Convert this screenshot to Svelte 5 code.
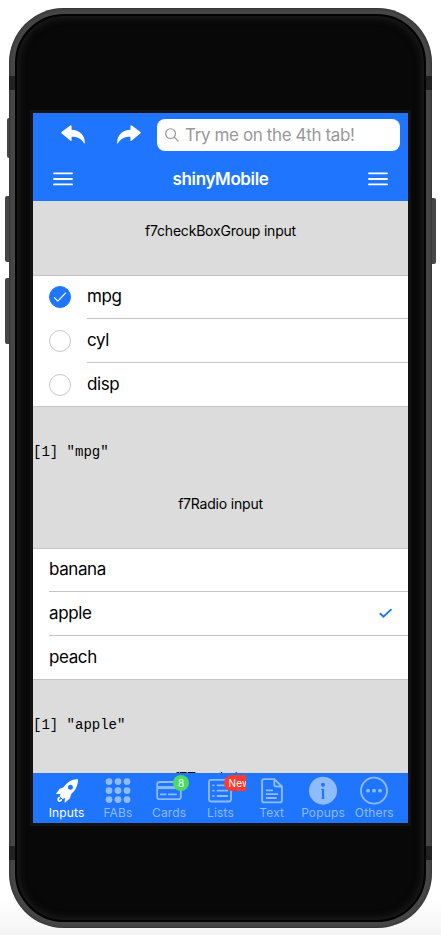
<script>
  const checks = [
    { label: 'mpg', on: true },
    { label: 'cyl', on: false },
    { label: 'disp', on: false }
  ];
  const radios = [
    { label: 'banana', on: false },
    { label: 'apple', on: true },
    { label: 'peach', on: false }
  ];
  const tabs = ['Inputs', 'FABs', 'Cards', 'Lists', 'Text', 'Popups', 'Others'];
  const grid = [5, 14, 23];
</script>

{#snippet menu()}
  <svg class="menu" width="20" height="14" viewBox="0 0 20 14" stroke="#fff" stroke-width="1.8" stroke-linecap="round">
    <path d="M1 1.3h18M1 7h18M1 12.4h18" />
  </svg>
{/snippet}

<div class="page">
  <div class="phone">
    <i class="band top"></i>
    <i class="band bottom"></i>
    <i class="key mute"></i>
    <i class="key up"></i>
    <i class="key down"></i>
    <i class="key power"></i>
    <div class="body">
      <div class="screen">
        <header class="subbar">
          <svg class="undo" width="25" height="20" viewBox="0 0 26 20" fill="#fff" preserveAspectRatio="none"><path d="M.5 8.2Q0 7.7.6 7.1L9.6.5Q11 0 11 1.4V4.7C19 5 25.2 10 24.8 18.2Q24.5 19 24 18.2C21 13.5 17 11.8 11 11.8V15Q11 16.4 9.6 15.6Z" /></svg>
          <svg class="redo" width="25" height="20" viewBox="0 0 26 20" fill="#fff" preserveAspectRatio="none"><path transform="matrix(-1 0 0 1 25 0)" d="M.5 8.2Q0 7.7.6 7.1L9.6.5Q11 0 11 1.4V4.7C19 5 25.2 10 24.8 18.2Q24.5 19 24 18.2C21 13.5 17 11.8 11 11.8V15Q11 16.4 9.6 15.6Z" /></svg>
          <div class="search">
            <svg width="14" height="14" viewBox="0 0 14 14" fill="none" stroke="#939398" stroke-width="1.15" stroke-linecap="round"><circle cx="5.6" cy="5.6" r="4.9" /><path d="m9.2 9.2 4 4" /></svg>
            <span>Try me on the 4th tab!</span>
          </div>
        </header>
        <nav class="navbar">
          {@render menu()}
          <span class="title">shinyMobile</span>
          {@render menu()}
        </nav>
        <main>
          <div class="heading first"><span>f7checkBoxGroup input</span></div>
          <ul class="list">
            {#each checks as c}
              <li>
                <span class="box" class:on={c.on}>
                  {#if c.on}
                    <svg width="14" height="12" viewBox="0 0 14 12" fill="none" stroke="#fff" stroke-width="1.1" stroke-linecap="round" stroke-linejoin="round"><path d="m1.4 6.6 3.4 3.5L12.6 2" /></svg>
                  {/if}
                </span>
                <span class="inner">{c.label}</span>
              </li>
            {/each}
          </ul>
          <pre>[1] "mpg"</pre>
          <div class="heading second"><span>f7Radio input</span></div>
          <ul class="list">
            {#each radios as r}
              <li>
                <span class="inner">{r.label}
                  {#if r.on}
                    <svg width="14" height="12" viewBox="0 0 14 12" fill="none" stroke="#1f75fe" stroke-width="1.9"><path d="m.8 6.3 3.7 3.5 8-7.7" /></svg>
                  {/if}
                </span>
              </li>
            {/each}
          </ul>
          <pre>[1] "apple"</pre>
          <div class="heading third"><span>f7Toggle input</span></div>
        </main>
        <footer class="tabbar">
          {#each tabs as t, i}
            <div class="tab" class:active={i === 0}>
              <div class="icon">
                <svg width="28" height="28" viewBox="0 0 28 28" fill="none" stroke="currentColor" stroke-width="1.8" stroke-linecap="round" stroke-linejoin="round">
                  {#if i === 0}
                    <path fill="currentColor" stroke="none" fill-rule="evenodd" d="M24.9 2.4C19 2 14 5.6 10.3 10.6L6.6 11.8 2.9 16.9 7.6 16.9 6.6 19.2 9.7 22.1 12 21 11.6 26 17 21.2 18.2 16.9C22.6 13.2 25.3 8 24.9 2.4ZM17.4 7.8a2.5 2.5 0 1 1 0 5a2.5 2.5 0 0 1 0-5Z" />
                    <path stroke-width="1.7" d="M6.2 20.6Q4.3 22.1 5.8 24Q6.9 24.3 8.3 22.8" />
                  {:else if i === 1}
                    {#each grid as y}{#each grid as x}<circle cx={x} cy={y - 0.4} r="3.4" fill="currentColor" stroke="none" />{/each}{/each}
                  {:else if i === 2}
                    <rect x="2.2" y="5" width="23.6" height="17.2" rx="2.2" />
                    <path stroke-linecap="butt" stroke-width="3" d="M2.2 10.6h23.6" />
                    <path d="M5.8 17.4h4.8M13.8 17.4h7.2" />
                  {:else if i === 3}
                    <rect x="3" y="2.9" width="22" height="21.6" rx="2.2" />
                    <path d="M7 8.3h.8M7 13.7h.8M7 19h.8M11.5 8.3h9.8M11.5 13.7h9.8M11.5 19h9.8" />
                  {:else if i === 4}
                    <path stroke-width="1.9" d="M16.3 2.1H6.1Q4.1 2.1 4.1 4.1V23.4Q4.1 25.4 6.1 25.4H21.9Q23.9 25.4 23.9 23.4V9.5L16.3 2.1V7.5Q16.3 9.5 18.3 9.5H23.9" />
                    <path d="M8.6 13.4h5.7M8.6 17.2h10.8M8.6 21h9.4" />
                  {:else if i === 5}
                    <circle cx="14" cy="13.7" r="14" fill="currentColor" stroke="none" />
                    <circle cx="14" cy="7.8" r="2" fill="#1f75fe" stroke="none" />
                    <path stroke="#1f75fe" stroke-linecap="butt" stroke-width="2.1" d="M14 12v9.6" />
                    <path stroke="#1f75fe" stroke-linecap="butt" stroke-width="1" d="M12.4 12.4h2.4M12.4 21.2h3.2" />
                  {:else}
                    <circle cx="14" cy="13.7" r="13" />
                    <g fill="currentColor" stroke="none"><circle cx="8" cy="13.7" r="1.9" /><circle cx="14" cy="13.7" r="1.9" /><circle cx="20" cy="13.7" r="1.9" /></g>
                  {/if}
                </svg>
                {#if t === 'Cards'}<b class="badge green">8</b>{/if}
                {#if t === 'Lists'}<b class="badge red">New</b>{/if}
              </div>
              <span>{t}</span>
            </div>
          {/each}
        </footer>
      </div>
    </div>
  </div>
</div>

<style>
  .page {
    box-sizing: border-box;
    width: 441px;
    height: 935px;
    padding: 8px 9px 7px;
    overflow: hidden;
    font-family: Inter, "Liberation Sans", sans-serif;
    background: linear-gradient(#fff 900px, #f4f4f4 935px);
  }
  .phone {
    position: relative;
    box-sizing: border-box;
    width: 423px;
    height: 920px;
    padding: 6px;
    border-radius: 55px;
    background: #464646;
    box-shadow: inset 0 0 3px #222;
  }
  .band {
    position: absolute;
    left: 0;
    width: 423px;
    height: 14px;
    background: #212121;
  }
  .band.top { top: 68px; }
  .band.bottom { top: 838px; }
  .key { position: absolute; background: #464646; }
  .mute { left: -2px; top: 110px; width: 2px; height: 40px; border-radius: 2px 0 0 2px; }
  .up, .down { left: -4px; width: 4px; height: 66px; border-radius: 2px 0 0 2px; }
  .up { top: 188px; }
  .down { top: 270px; }
  .power { left: 423px; top: 190px; width: 4px; height: 66px; border-radius: 0 2px 2px 0; }
  .body {
    position: relative;
    box-sizing: border-box;
    width: 411px;
    height: 908px;
    padding: 97px 16px;
    border: 2px solid #030303;
    border-radius: 49px;
    background: #080808;
    box-shadow: inset 0 0 10px 0 #282828;
  }
  .screen {
    display: flex;
    flex-direction: column;
    width: 375px;
    height: 710px;
    background: #dcdcdc;
    box-shadow: 0 0 0 3px #121212;
  }
  .subbar, .navbar {
    display: flex;
    align-items: center;
    flex: none;
    box-sizing: border-box;
    height: 44px;
    background: #1f75fe;
  }
  .subbar { padding: 0 8px 0 28px; }
  .undo { margin: 0 31px 0 0; }
  .redo { margin: 0 15px 0 0; }
  .search {
    display: flex;
    align-items: center;
    box-sizing: border-box;
    width: 243px;
    height: 32px;
    padding-left: 8px;
    gap: 6px;
    border-radius: 8px;
    background: #fff;
    color: #98989b;
    font-size: 17px;
    letter-spacing: -0.38px;
    white-space: nowrap;
  }
  .navbar {
    justify-content: space-between;
    padding: 0 20px;
    color: #fff;
  }
  .title { font-size: 17px; font-weight: 600; letter-spacing: -0.38px; }
  main {
    height: 572px;
    overflow: hidden;
    color: #000;
  }
  .heading { font-size: 14px; line-height: 18px; text-align: center; white-space: nowrap; letter-spacing: -0.2px; }
  .first { padding: 21px 0 35px; }
  .second { padding: 34px 0 35px; }
  .third { padding-top: 35px; }
  .list {
    margin: 0;
    padding: 0;
    list-style: none;
    background: #fff;
    box-shadow: inset 0 1px #c4c4c6;
  }
  li {
    display: flex;
    align-items: center;
    box-sizing: border-box;
    height: 44px;
    padding-left: 16px;
    font-size: 17px;
    letter-spacing: -0.4px;
  }
  li:last-child { box-shadow: inset 0 -1px #c4c4c6; }
  .inner {
    display: flex;
    align-items: center;
    justify-content: space-between;
    flex: 1;
    box-sizing: border-box;
    height: 44px;
    padding: 0 15px 1px 0;
    border-bottom: 1px solid #c4c4c6;
  }
  li:last-child .inner { border-color: transparent; }
  .box {
    display: flex;
    align-items: center;
    justify-content: center;
    box-sizing: border-box;
    width: 22px;
    height: 22px;
    margin-right: 16px;
    border: 1px solid #c7c7cc;
    border-radius: 50%;
  }
  .box.on { border-color: #1f75fe; background: #1f75fe; }
  pre {
    margin: 0;
    padding: 37px 0 0;
    font-family: "Courier New", "Liberation Mono", monospace;
    font-size: 14px;
    line-height: 17px;
    height: 17px;
  }
  .tabbar {
    display: flex;
    justify-content: space-between;
    flex: none;
    box-sizing: border-box;
    height: 50px;
    padding: 0 8px;
    background: #1f75fe;
    color: #8fbbff;
  }
  .tab {
    display: flex;
    flex-direction: column;
    align-items: center;
    width: 51.3px;
    padding-top: 4px;
    font-size: 12px;
    line-height: 15px;
    letter-spacing: 0.15px;
  }
  .tab.active { color: #fff; }
  .icon { position: relative; width: 28px; height: 28px; }
  .icon svg { display: block; overflow: visible; }
  .badge {
    position: absolute;
    top: -2px;
    left: 18px;
    box-sizing: border-box;
    height: 16px;
    color: #fff;
    font-size: 10px;
    font-weight: 400;
    line-height: 16px;
    text-align: center;
  }
  .green { width: 16px; border-radius: 8px; background: #4cd964; }
  .red { width: 22px; padding-left: 4px; border-radius: 8px 0 0 8px; background: #ff3b30; overflow: hidden; text-align: left; }
</style>
